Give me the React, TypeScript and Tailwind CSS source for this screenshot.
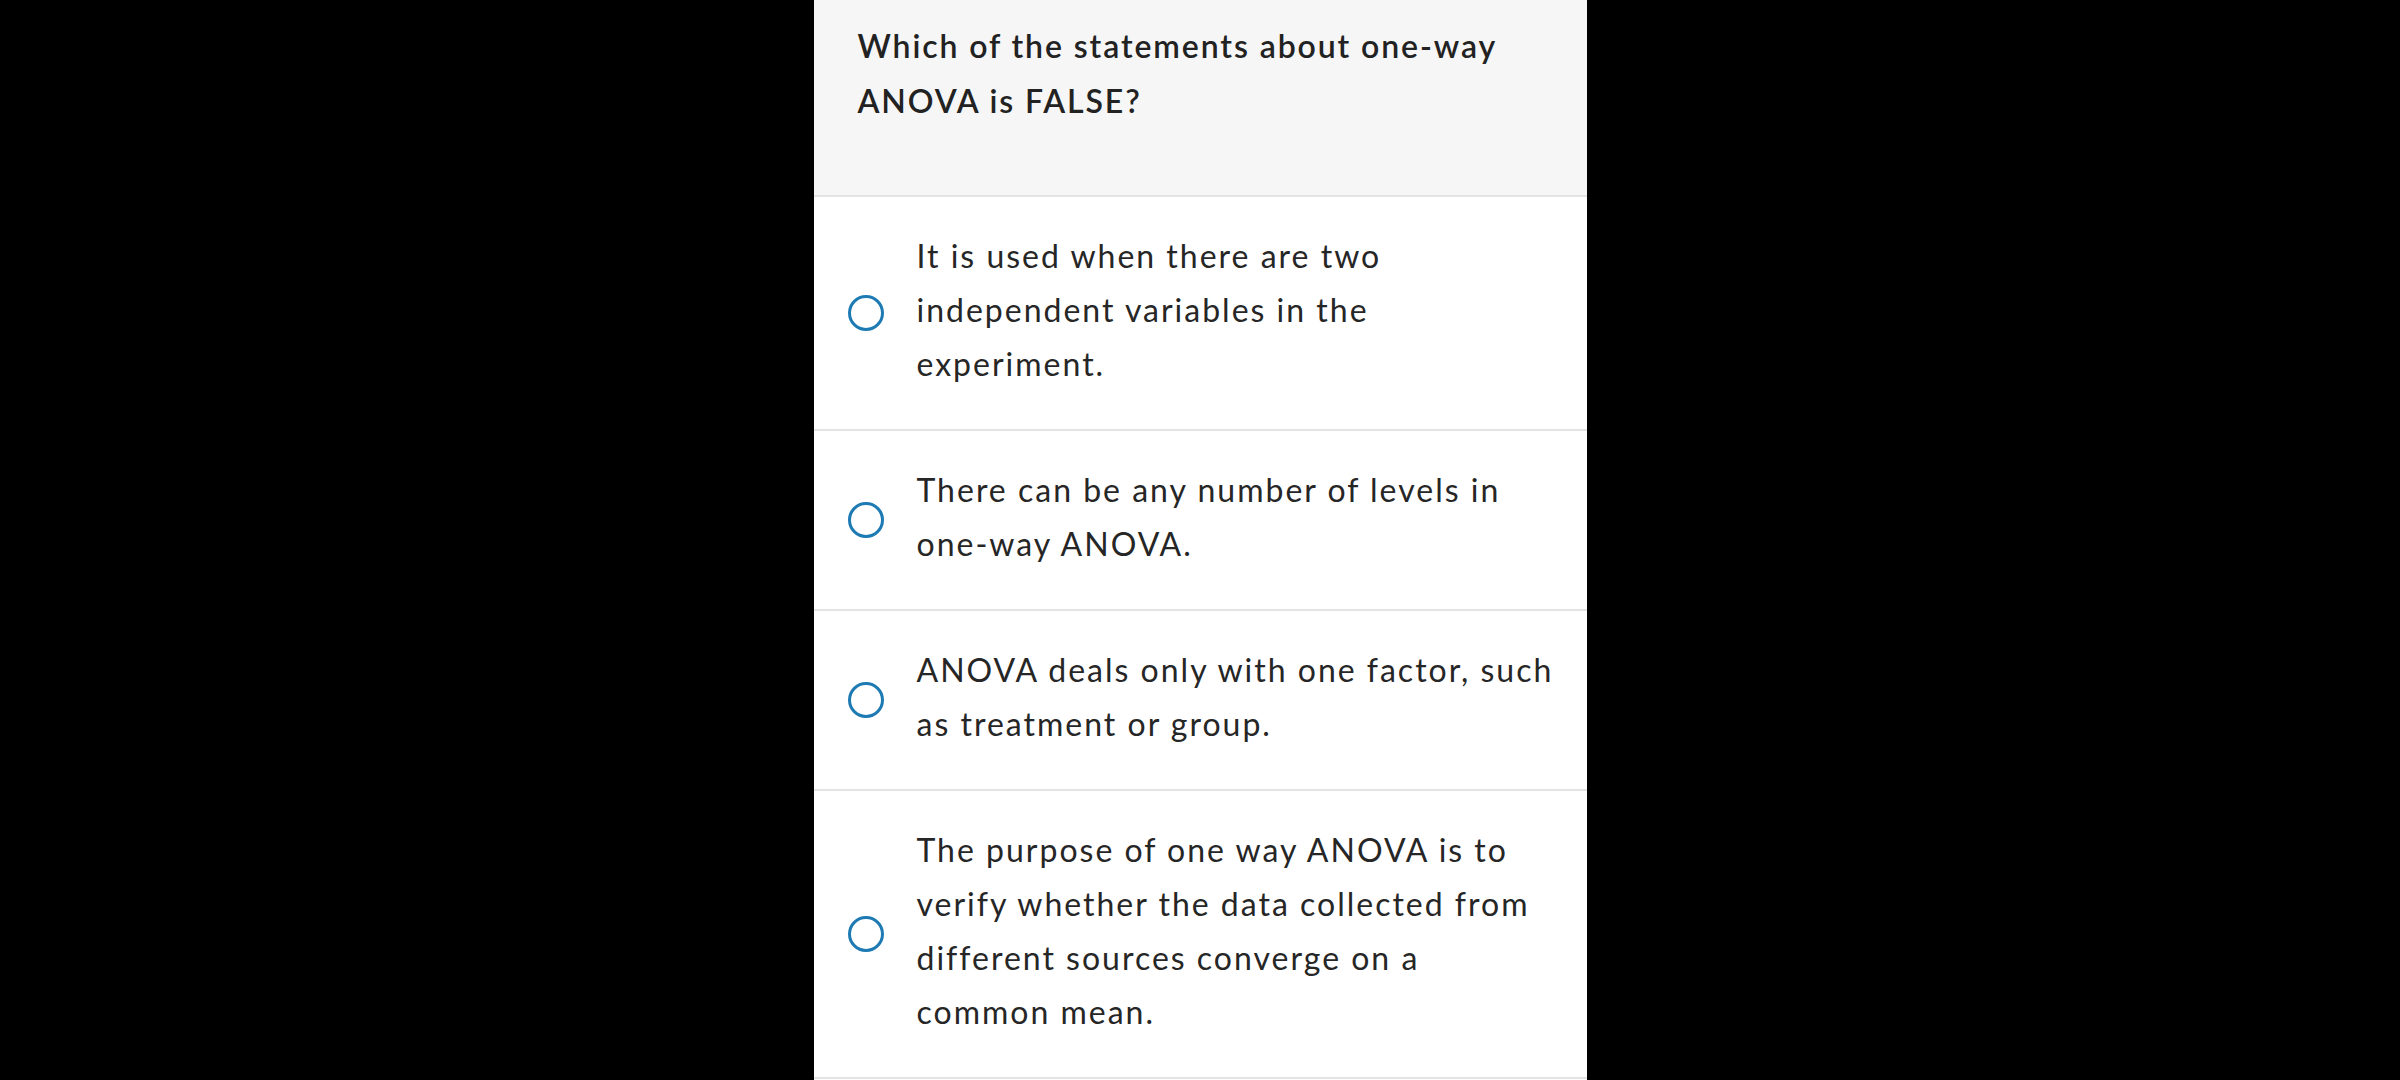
import React from "react";

const options: string[][] = [
  ["It is used when there are two", "independent variables in the", "experiment."],
  ["There can be any number of levels in", "one-way ANOVA."],
  ["ANOVA deals only with one factor, such", "as treatment or group."],
  [
    "The purpose of one way ANOVA is to",
    "verify whether the data collected from",
    "different sources converge on a",
    "common mean.",
  ],
];

function Radio() {
  return (
    <div className="w-[36px] h-[36px] shrink-0 rounded-full border-[3px] border-[#1d7ab3] bg-white" />
  );
}

export default function App() {
  return (
    <div
      className="w-full h-[1080px] bg-black flex justify-center overflow-hidden"
      style={{ fontFamily: "Lato, 'Open Sans', sans-serif" }}
    >
      <div className="w-[773px] h-[1080px] bg-white flex flex-col">
        <div className="bg-[#f6f6f6] border-b-2 border-[#e3e3e3] pl-[44px] pr-[20px] pt-[18px] pb-[67px]">
          <div className="text-[32px] leading-[55px] font-semibold tracking-[1.9px] text-[#222222] whitespace-nowrap">
            Which of the statements about one-way
            <br />
            ANOVA is FALSE?
          </div>
        </div>
        {options.map((lines, i) => (
          <div
            key={i}
            className="flex items-center gap-[33px] pl-[34px] pr-[20px] py-[35px] border-b-2 border-[#e3e3e3]"
          >
            <Radio />
            <div className="-mt-[3px] mb-[3px] text-[32px] leading-[54px] tracking-[2px] text-[#262626] whitespace-nowrap">
              {lines.map((l, j) => (
                <React.Fragment key={j}>
                  {l}
                  {j < lines.length - 1 && <br />}
                </React.Fragment>
              ))}
            </div>
          </div>
        ))}
      </div>
    </div>
  );
}
